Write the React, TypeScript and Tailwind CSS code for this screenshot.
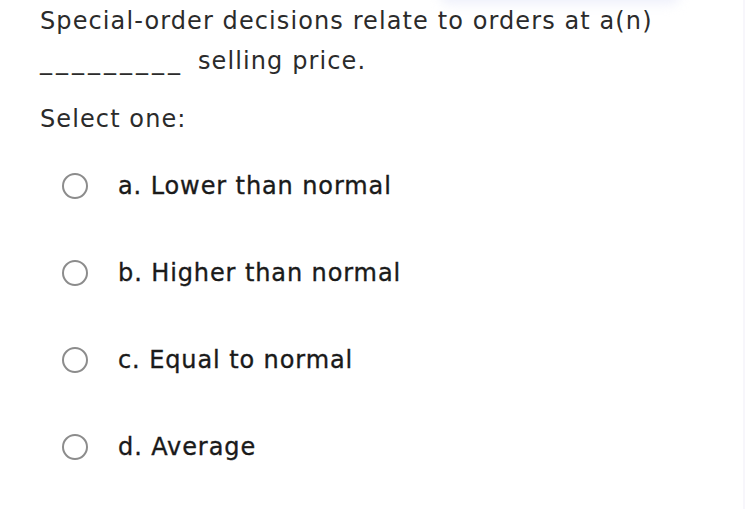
import React from "react";

const options = [
  "a. Lower than normal",
  "b. Higher than normal",
  "c. Equal to normal",
  "d. Average",
];

export default function App() {
  return (
    <div
      className="relative w-[745px] h-[509px] overflow-hidden bg-white text-[#2a2a2a]"
      style={{ fontFamily: '"DejaVu Sans", "Noto Sans", sans-serif' }}
    >
      <div className="absolute left-[440px] top-[-14px] w-[240px] h-[18px] rounded-full bg-[#eef0fb] blur-[6px]" />
      <div className="absolute right-0 top-0 w-[2px] h-full bg-[#f7f6fb]" />
      <div className="relative px-[40px] pt-[1px]">
        <div className="text-[24px] leading-[40px] tracking-[1.1px] text-[#2b2b2b]">
          <div>Special-order decisions relate to orders at a(n)</div>
          <div className="flex items-baseline">
            <span className="tracking-[4px]">_________</span>
            <span className="ml-[14px]">selling price.</span>
          </div>
        </div>
        <div className="mt-[18px] text-[24px] leading-[40px] tracking-[1.1px] text-[#2b2b2b]">
          Select one:
        </div>
        <div className="mt-[27px] flex flex-col gap-[47px]">
          {options.map((o) => (
            <div key={o} className="flex items-center h-[40px]">
              <div className="ml-[22px] w-[26px] h-[26px] rounded-full border-[2.5px] border-[#8c8c8c]" />
              <span className="ml-[30px] text-[24px] tracking-[0.9px] text-[#1a1a1a] [-webkit-text-stroke:0.35px_#1a1a1a]">{o}</span>
            </div>
          ))}
        </div>
      </div>
    </div>
  );
}
